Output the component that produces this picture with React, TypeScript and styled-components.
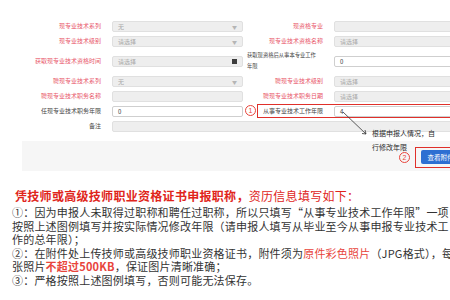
import styled, { createGlobalStyle } from "styled-components";

interface FieldDef {
  label: string;
  required?: boolean;
  value: string;
  editable?: boolean;
  icon?: "caret" | "date";
  small?: boolean;
  wrap?: boolean;
}

const ROWS: [FieldDef, FieldDef][] = [
  [
    { label: "现专业技术系列", required: true, value: "无", icon: "caret" },
    { label: "现资格专业", required: true, value: "" },
  ],
  [
    { label: "现专业技术级别", required: true, value: "请选择", icon: "caret" },
    { label: "现专业技术资格名称", required: true, value: "请选择" },
  ],
  [
    { label: "获取现专业技术资格时间", required: true, value: "请选择", icon: "date" },
    { label: "获取现资格后从事本专业工作年限", value: "0", editable: true, small: true, wrap: true },
  ],
  [
    { label: "聘现专业技术系列", required: true, value: "无", icon: "caret" },
    { label: "聘现专业技术级别", required: true, value: "请选择" },
  ],
  [
    { label: "聘现专业技术职务名称", required: true, value: "" },
    { label: "聘现专业技术职务日期", required: true, value: "请选择" },
  ],
  [
    { label: "任现专业技术职务年限", value: "0", editable: true },
    { label: "从事专业技术工作年限", value: "4", editable: true },
  ],
];

const GlobalStyle = createGlobalStyle`
  html, body {
    margin: 0;
    padding: 0;
    background: #ffffff;
  }
  body {
    font-family: "Noto Sans CJK SC", "Noto Sans", sans-serif;
  }
`;

const Page = styled.div`
  width: 450px;
  height: 300px;
  overflow: hidden;
  background: #ffffff;
`;

const Shot = styled.div`
  position: relative;
  width: 480px;
  padding-top: 20px;
`;

const FormGrid = styled.div`
  display: grid;
  grid-template-columns: 112px 131px 91px 146px;
  grid-template-rows: 12px 12px 22px 12px 12px 12px 12px;
  row-gap: 3px;
  align-items: center;
`;

const Label = styled.div<{ $required?: boolean; $small?: boolean; $wrap?: boolean }>`
  font-size: ${({ $small }) => ($small ? "5.3px" : "6px")};
  line-height: ${({ $wrap }) => ($wrap ? "11px" : "12px")};
  color: ${({ $required }) => ($required ? "#e8566a" : "#444444")};
  text-align: ${({ $wrap }) => ($wrap ? "left" : "right")};
  padding: ${({ $wrap }) => ($wrap ? "0 14px 0 4px" : "0 11px 0 0")};
  white-space: ${({ $wrap }) => ($wrap ? "normal" : "nowrap")};
`;

const Field = styled.div<{ $editable?: boolean; $span?: boolean }>`
  position: relative;
  box-sizing: border-box;
  height: 11px;
  display: flex;
  align-items: center;
  padding: 0 5px;
  font-size: 6px;
  color: ${({ $editable }) => ($editable ? "#333333" : "#a8a8a8")};
  background: ${({ $editable }) => ($editable ? "#ffffff" : "#eeeeee")};
  border: 1px solid ${({ $editable }) => ($editable ? "#cfcfcf" : "#e0e0e0")};
  border-radius: 2px;
  grid-column: ${({ $span }) => ($span ? "2 / 5" : "auto")};
`;

const Caret = styled.span`
  position: absolute;
  right: 5px;
  top: 1px;
  font-size: 5px;
  color: #b5b5b5;
`;

const DateIcon = styled.span`
  position: absolute;
  right: 5px;
  top: 2px;
  width: 5px;
  height: 5px;
  background: #3d3d3d;
`;

const Circle = styled.span`
  position: absolute;
  box-sizing: border-box;
  width: 11px;
  height: 11px;
  border: 1px solid #e8453c;
  border-radius: 50%;
  color: #e8453c;
  font-size: 7px;
  line-height: 9px;
  text-align: center;
  font-family: "Liberation Sans", sans-serif;
`;

const FirstCircle = styled(Circle)`
  left: 245px;
  top: 105px;
`;

const RedBox = styled.div`
  position: absolute;
  left: 257px;
  top: 104px;
  width: 230px;
  height: 14px;
  box-sizing: border-box;
  border: 1.5px solid #e0302a;
`;

const Arrow = styled.svg`
  position: absolute;
  left: 340px;
  top: 109px;
`;

const Note = styled.div`
  position: absolute;
  left: 372px;
  top: 126px;
  font-size: 7px;
  line-height: 14px;
  color: #2a2a2a;
  white-space: nowrap;
`;

const Band = styled.div`
  margin: 9px 0 0 22px;
  height: 30px;
  background: #f6f6f6;
  display: flex;
  align-items: center;
  justify-content: flex-end;
  padding-right: 14px;
  gap: 5px;
`;

const InlineCircle = styled(Circle)`
  position: static;
  display: inline-block;
  margin-top: 3px;
`;

const ButtonFrame = styled.div`
  border: 1.5px solid #e0302a;
  padding: 2.5px 4.5px;
  margin-top: 2px;
`;

const ViewButton = styled.div`
  width: 40px;
  height: 14px;
  background: #2d6fd2;
  border-radius: 2px;
  color: #ffffff;
  font-size: 6.5px;
  line-height: 14px;
  padding-left: 7px;
  box-sizing: border-box;
`;

const Notes = styled.div`
  padding: 17px 0 0 12px;
  white-space: nowrap;
`;

const Heading = styled.div`
  padding-left: 3px;
  font-size: 12px;
  line-height: 16px;
  letter-spacing: 0.3px;
  color: #e0251b;
`;

const Strong = styled.span`
  font-weight: 700;
`;

const Body = styled.div`
  margin-top: 2px;
  font-size: 11px;
  line-height: 13.6px;
  letter-spacing: 0.2px;
  color: #333333;
`;

const Line = styled.div``;

const Red = styled.span<{ $bold?: boolean }>`
  color: #e8453c;
  font-weight: ${({ $bold }) => ($bold ? 700 : 400)};
`;

function FormField({ def }: { def: FieldDef }) {
  return (
    <>
      <Label $required={def.required} $small={def.small} $wrap={def.wrap}>
        {def.label}
      </Label>
      <Field $editable={def.editable}>
        {def.value}
        {def.icon === "caret" && <Caret>▼</Caret>}
        {def.icon === "date" && <DateIcon />}
      </Field>
    </>
  );
}

export default function App() {
  return (
    <Page>
      <GlobalStyle />
      <Shot>
        <FormGrid>
          {ROWS.map(([left, right]) => (
            <>
              <FormField key={left.label} def={left} />
              <FormField key={right.label} def={right} />
            </>
          ))}
          <Label>备注</Label>
          <Field $span />
        </FormGrid>
        <Band>
          <InlineCircle>2</InlineCircle>
          <ButtonFrame>
            <ViewButton>查看附件</ViewButton>
          </ButtonFrame>
        </Band>

        <FirstCircle>1</FirstCircle>
        <RedBox />
        <Arrow width="32" height="30" viewBox="0 0 32 30">
          <path d="M3 3 L26 25" stroke="#333" strokeWidth="0.8" fill="none" />
          <path d="M22 24.5 L26 25 L25 21" stroke="#333" strokeWidth="0.8" fill="none" />
        </Arrow>
        <Note>
          根据申报人情况，自
          <br />
          行修改年限
        </Note>
      </Shot>

      <Notes>
        <Heading>
          <Strong>凭技师或高级技师职业资格证书申报职称，</Strong>资历信息填写如下：
        </Heading>
        <Body>
          <Line>①：因为申报人未取得过职称和聘任过职称，所以只填写“从事专业技术工作年限”一项：</Line>
          <Line>按照上述图例填写并按实际情况修改年限（请申报人填写从毕业至今从事申报专业技术工</Line>
          <Line>作的总年限）；</Line>
          <Line>
            ②：在附件处上传技师或高级技师职业资格证书，附件须为<Red>原件彩色照片</Red>（JPG格式），每
          </Line>
          <Line>
            张照片<Red $bold>不超过500KB</Red>，保证图片清晰准确；
          </Line>
          <Line>③：严格按照上述图例填写，否则可能无法保存。</Line>
        </Body>
      </Notes>
    </Page>
  );
}
